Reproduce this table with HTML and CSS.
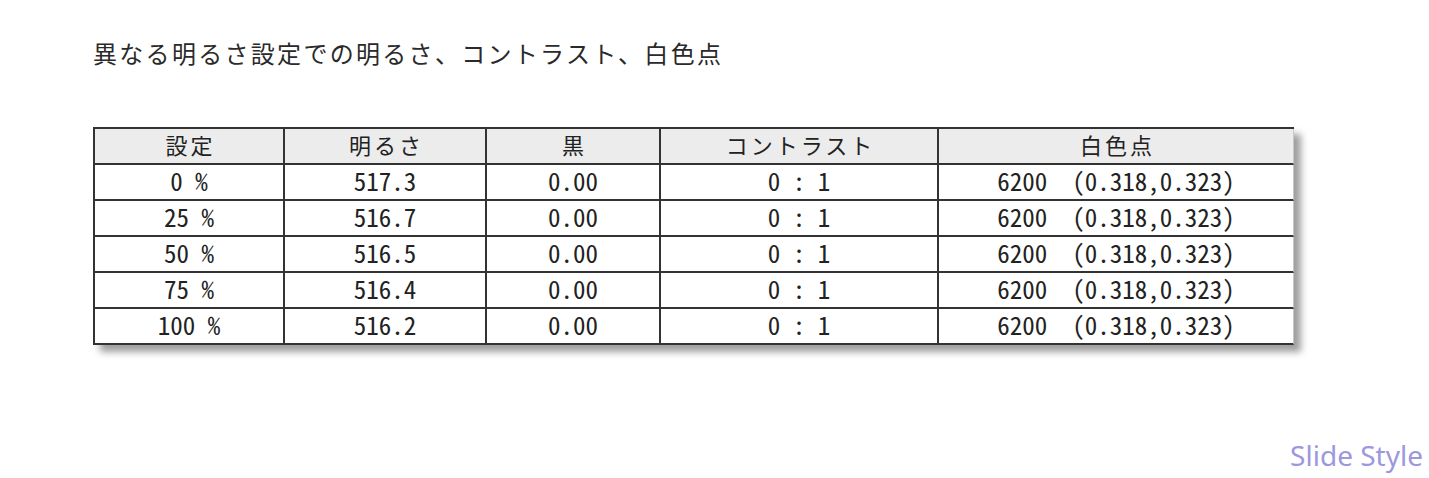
FILE: index.html
```html
<!DOCTYPE html>
<html lang="ja">
<head>
<meta charset="utf-8">
<title>明るさ設定</title>
<link rel="stylesheet" href="styles.css">
</head>
<body>
<div class="page">
  <h1 class="title">異なる明るさ設定での明るさ、コントラスト、白色点</h1>
  <div class="grid" role="table">
    <div class="cell head">設定</div>
    <div class="cell head">明るさ</div>
    <div class="cell head">黒</div>
    <div class="cell head">コントラスト</div>
    <div class="cell head last">白色点</div>

    <div class="cell">0 %</div>
    <div class="cell">517.3</div>
    <div class="cell">0.00</div>
    <div class="cell">0 : 1</div>
    <div class="cell last">6200  (0.318,0.323)</div>

    <div class="cell">25 %</div>
    <div class="cell">516.7</div>
    <div class="cell">0.00</div>
    <div class="cell">0 : 1</div>
    <div class="cell last">6200  (0.318,0.323)</div>

    <div class="cell">50 %</div>
    <div class="cell">516.5</div>
    <div class="cell">0.00</div>
    <div class="cell">0 : 1</div>
    <div class="cell last">6200  (0.318,0.323)</div>

    <div class="cell">75 %</div>
    <div class="cell">516.4</div>
    <div class="cell">0.00</div>
    <div class="cell">0 : 1</div>
    <div class="cell last">6200  (0.318,0.323)</div>

    <div class="cell">100 %</div>
    <div class="cell">516.2</div>
    <div class="cell">0.00</div>
    <div class="cell">0 : 1</div>
    <div class="cell last">6200  (0.318,0.323)</div>
  </div>
</div>
<div class="watermark">Slide Style</div>
</body>
</html>
```
FILE: styles.css
```css
html, body {
  margin: 0;
  padding: 0;
  background: #ffffff;
}
body {
  width: 1429px;
  height: 478px;
  position: relative;
  overflow: hidden;
  font-family: "Noto Sans CJK JP", "Noto Sans", sans-serif;
}
.page {
  display: flex;
  flex-direction: column;
  align-items: flex-start;
  padding: 38px 0 0 93px;
}
.title {
  margin: 0;
  font-size: 24px;
  font-weight: 400;
  line-height: 30px;
  letter-spacing: 2.3px;
  color: #2a2a2a;
}
.grid {
  margin-top: 59px;
  display: grid;
  grid-template-columns: 190px 202px 174px 278px 355px;
  grid-auto-rows: 36px;
  border-top: 2px solid #333333;
  border-left: 2px solid #333333;
  box-shadow: 7px 7px 7px rgba(0, 0, 0, 0.38);
  background: #ffffff;
}
.cell {
  box-sizing: border-box;
  display: flex;
  align-items: center;
  justify-content: center;
  padding-bottom: 4px;
  border-right: 2px solid #333333;
  border-bottom: 2px solid #333333;
  font-family: "Noto Sans Mono CJK JP", "Liberation Mono", monospace;
  font-size: 25px;
  line-height: 1;
  color: #222222;
  white-space: pre;
}
.cell.last {
  border-right: 1px solid #c8c8c8;
}
.head {
  background: #ececec;
  font-family: "Noto Sans CJK JP", sans-serif;
  font-size: 22px;
  letter-spacing: 3px;
  padding-left: 3px;
}
.watermark {
  position: absolute;
  top: 440px;
  right: 6px;
  font-family: "Noto Sans", sans-serif;
  font-size: 28px;
  line-height: 30px;
  color: #9d97df;
}
```
